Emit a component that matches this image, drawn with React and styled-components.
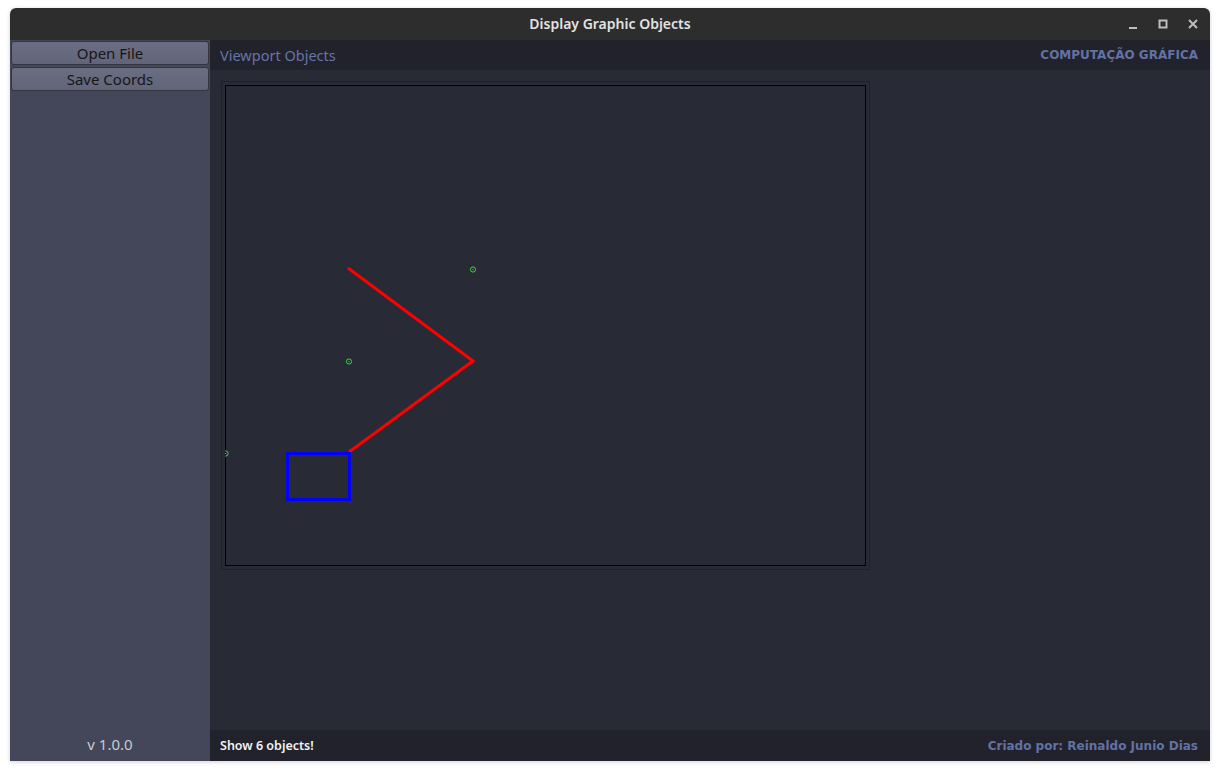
import React from 'react'
import styled, { createGlobalStyle } from 'styled-components'

const GlobalStyle = createGlobalStyle`
  html, body {
    margin: 0;
    padding: 0;
    background: #ffffff;
  }
  body {
    font-family: 'Noto Sans', 'DejaVu Sans', sans-serif;
  }
`

const Page = styled.div`
  width: 1220px;
  height: 771px;
  padding: 8px 10px 10px 10px;
  box-sizing: border-box;
`

const Window = styled.div`
  width: 1200px;
  height: 753px;
  display: flex;
  flex-direction: column;
  border-radius: 6px 6px 0 0;
  overflow: hidden;
  box-shadow: 0 1px 4px rgba(0, 0, 0, 0.18);
`

const TitleBar = styled.div`
  height: 32px;
  flex: none;
  background: #2d2d2d;
  display: flex;
  align-items: center;
  justify-content: center;
  position: relative;
  color: #e2e2e2;
  font-size: 14px;
  font-weight: 600;
  padding-bottom: 1px;
  box-sizing: border-box;
`

const Controls = styled.div`
  position: absolute;
  right: 9px;
  top: 0;
  height: 32px;
  display: flex;
  align-items: center;
  gap: 14px;
`

const Ctrl = styled.div`
  width: 16px;
  height: 16px;
  display: flex;
  align-items: center;
  justify-content: center;
`

const Body = styled.div`
  flex: 1;
  display: flex;
  min-height: 0;
`

const Sidebar = styled.div`
  width: 200px;
  flex: none;
  background: #44475a;
  display: flex;
  flex-direction: column;
  padding: 1px 1px 0 1px;
  box-sizing: border-box;
  gap: 2px;
`

const Button = styled.button`
  height: 24px;
  border: 1px solid #34353f;
  border-radius: 3px;
  background: linear-gradient(#6b6d81, #62647a);
  color: #161616;
  font-family: 'Noto Sans', 'DejaVu Sans', sans-serif;
  font-size: 15px;
  padding: 0;
  line-height: 20px;
`

const Version = styled.div`
  margin-top: auto;
  height: 31px;
  padding-bottom: 3px;
  box-sizing: border-box;
  display: flex;
  align-items: center;
  justify-content: center;
  color: #c9cad2;
  font-size: 15px;
`

const Main = styled.div`
  flex: 1;
  display: flex;
  flex-direction: column;
  background: #282a35;
  min-width: 0;
`

const Bar = styled.div`
  height: ${p => p.$h}px;
  flex: none;
  background: #21222c;
  display: flex;
  align-items: center;
  justify-content: space-between;
  padding: 0 12px 0 10px;
`

const HeaderTitle = styled.span`
  color: #6674a6;
  font-size: 14.5px;
`

const Brand = styled.span`
  color: #6272a4;
  font-family: 'DejaVu Sans', sans-serif;
  font-weight: bold;
  font-size: 12px;
`

const Status = styled.span`
  color: #f2f2f2;
  font-weight: 600;
  font-size: 12.5px;
`

const Content = styled.div`
  flex: 1;
  padding: 11px;
`

const Frame = styled.div`
  width: 641px;
  border: 1px solid #1f2029;
  padding: 3px;
`

const Canvas = styled.svg`
  display: block;
  width: 641px;
  height: 481px;
`

const Point = ({ x, y }) => (
  <g stroke="#33dd33" fill="none" strokeWidth="1">
    <circle cx={x} cy={y} r="2.6" />
    <rect x={x - 0.5} y={y - 0.5} width="1" height="1" fill="#33dd33" stroke="none" />
  </g>
)

export default function App() {
  return (
    <>
      <GlobalStyle />
      <Page>
        <Window>
          <TitleBar>
            Display Graphic Objects
            <Controls>
              <Ctrl>
                <svg width="16" height="16" viewBox="0 0 16 16">
                  <rect x="4" y="11" width="8" height="2" fill="#bdbdbd" />
                </svg>
              </Ctrl>
              <Ctrl>
                <svg width="16" height="16" viewBox="0 0 16 16">
                  <rect x="4.5" y="4.5" width="7" height="7" fill="none" stroke="#bdbdbd" strokeWidth="2" />
                </svg>
              </Ctrl>
              <Ctrl>
                <svg width="16" height="16" viewBox="0 0 16 16">
                  <path d="M4 4 L12 12 M12 4 L4 12" stroke="#bdbdbd" strokeWidth="2" />
                </svg>
              </Ctrl>
            </Controls>
          </TitleBar>
          <Body>
            <Sidebar>
              <Button>Open File</Button>
              <Button>Save Coords</Button>
              <Version>v 1.0.0</Version>
            </Sidebar>
            <Main>
              <Bar $h={30}>
                <HeaderTitle>Viewport Objects</HeaderTitle>
                <Brand>COMPUTAÇÃO GRÁFICA</Brand>
              </Bar>
              <Content>
                <Frame>
                  <Canvas viewBox="0 0 641 481">
                    <rect x="0.5" y="0.5" width="640" height="480" fill="#282a36" stroke="#000" strokeWidth="1" />
                    <polyline
                      points="123,183 248,276 124,367"
                      fill="none"
                      stroke="#ff0000"
                      strokeWidth="3"
                    />
                    <rect x="62.5" y="368.5" width="62" height="46" fill="none" stroke="#0000ff" strokeWidth="3" />
                    <Point x={248} y={184.5} />
                    <Point x={124} y={276.5} />
                    <Point x={0.5} y={368.5} />
                  </Canvas>
                </Frame>
              </Content>
              <Bar $h={31}>
                <Status>Show 6 objects!</Status>
                <Brand>Criado por: Reinaldo Junio Dias</Brand>
              </Bar>
            </Main>
          </Body>
        </Window>
      </Page>
    </>
  )
}
